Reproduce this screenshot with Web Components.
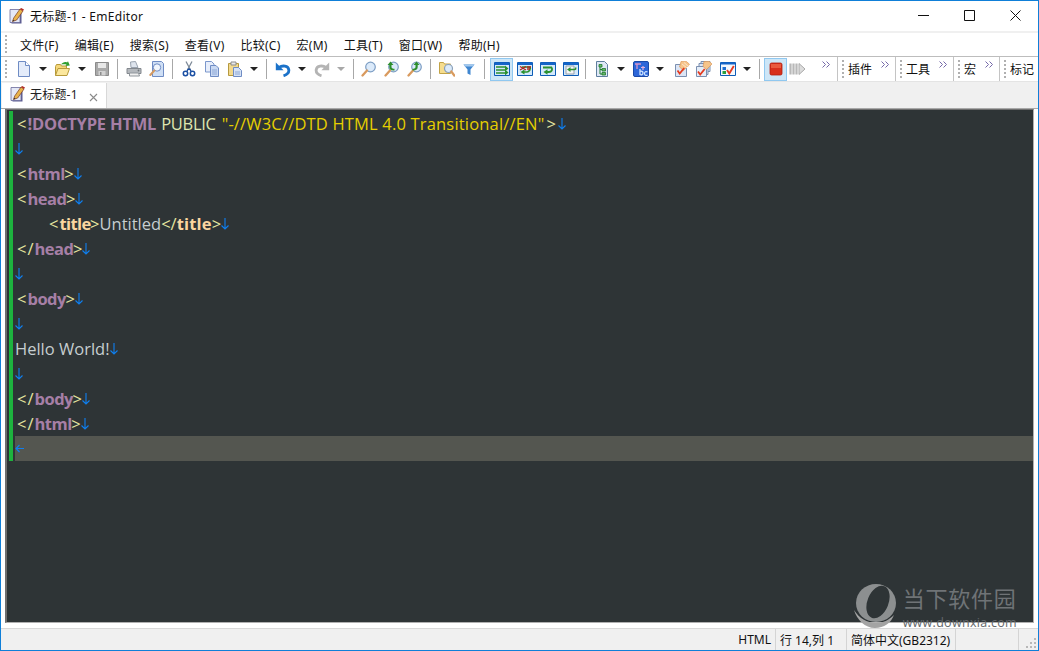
<!DOCTYPE html>
<html>
<head>
<meta charset="utf-8">
<title>EmEditor</title>
<style>
html, body { margin: 0; padding: 0; background: #fff; overflow: hidden; }
</style>
</head>
<body>
<em-window>
  <em-titlebar slot="title" caption="无标题-1 - EmEditor"></em-titlebar>
  <em-menubar slot="menu">
    <em-menu>文件(F)</em-menu><em-menu>编辑(E)</em-menu><em-menu>搜索(S)</em-menu><em-menu>查看(V)</em-menu><em-menu>比较(C)</em-menu><em-menu>宏(M)</em-menu><em-menu>工具(T)</em-menu><em-menu>窗口(W)</em-menu><em-menu>帮助(H)</em-menu>
  </em-menubar>
  <em-toolbar slot="tools">
    <tb-btn icon="doc"></tb-btn><tb-arrow></tb-arrow><tb-btn icon="open"></tb-btn><tb-arrow></tb-arrow><tb-btn icon="save"></tb-btn><tb-sep></tb-sep>
    <tb-btn icon="print"></tb-btn><tb-btn icon="preview"></tb-btn><tb-sep></tb-sep>
    <tb-btn icon="cut"></tb-btn><tb-btn icon="copy"></tb-btn><tb-btn icon="paste"></tb-btn><tb-arrow></tb-arrow><tb-sep></tb-sep>
    <tb-btn icon="undo"></tb-btn><tb-arrow></tb-arrow><tb-btn icon="redo"></tb-btn><tb-arrow off></tb-arrow><tb-sep></tb-sep>
    <tb-btn icon="find" style="margin-left:-1px"></tb-btn><tb-btn icon="findprev"></tb-btn><tb-btn icon="findnext"></tb-btn><tb-sep></tb-sep>
    <tb-btn icon="findfiles"></tb-btn><tb-btn icon="filter" style="margin-left:-1px"></tb-btn><tb-sep></tb-sep>
    <tb-btn icon="wrapnone" active style="margin-left:1px"></tb-btn><tb-btn icon="wrapchar"></tb-btn><tb-btn icon="wrapword"></tb-btn><tb-btn icon="wrapwin"></tb-btn><tb-sep style="margin-left:3px"></tb-sep>
    <tb-btn icon="outline"></tb-btn><tb-arrow></tb-arrow><tb-btn icon="charmap"></tb-btn><tb-arrow></tb-arrow><tb-btn icon="check" style="margin-left:2px"></tb-btn><tb-btn icon="checks" style="margin-left:-1px"></tb-btn><tb-btn icon="wincheck" style="margin-left:1px"></tb-btn><tb-arrow></tb-arrow><tb-sep style="margin-left:4px"></tb-sep>
    <tb-btn icon="stop" active></tb-btn><tb-btn icon="play" style="margin-left:-1.500px"></tb-btn>
    <tb-more style="width:28.500px"></tb-more>
    <tb-band label="插件" width="58"></tb-band>
    <tb-band label="工具" width="58"></tb-band>
    <tb-band label="宏" width="46"></tb-band>
    <tb-band label="标记" width="36" nomore></tb-band>
  </em-toolbar>
  <em-tabstrip slot="tabs"><em-tab caption="无标题-1"></em-tab></em-tabstrip>
  <em-editor slot="editor">
    <code-line><c-t k="o">&lt;</c-t><c-t k="tag" style="letter-spacing:-.2px">!DOCTYPE HTML</c-t><c-t k="attr"> PUBLIC </c-t><c-t k="str">"-//W3C//DTD HTML 4.0 Transitional//EN"</c-t><c-t k="p" style="margin-left:2px">&gt;</c-t><c-eol style="margin-left:2px"></c-eol></code-line>
    <code-line><c-eol></c-eol></code-line>
    <code-line><c-t k="o">&lt;</c-t><c-t k="tag">html</c-t><c-t k="q">&gt;</c-t><c-eol></c-eol></code-line>
    <code-line><c-t k="o">&lt;</c-t><c-t k="tag">head</c-t><c-t k="q">&gt;</c-t><c-eol></c-eol></code-line>
    <code-line indent><c-t k="o">&lt;</c-t><c-t k="title">title</c-t><c-t k="q">&gt;</c-t><c-t>Untitled</c-t><c-t k="p">&lt;/</c-t><c-t k="title" style="letter-spacing:.2px">title</c-t><c-t k="p">&gt;</c-t><c-eol></c-eol></code-line>
    <code-line><c-t k="o">&lt;/</c-t><c-t k="tag">head</c-t><c-t k="q">&gt;</c-t><c-eol></c-eol></code-line>
    <code-line><c-eol></c-eol></code-line>
    <code-line><c-t k="o">&lt;</c-t><c-t k="tag">body</c-t><c-t k="q">&gt;</c-t><c-eol></c-eol></code-line>
    <code-line><c-eol></c-eol></code-line>
    <code-line><c-t>Hello World!</c-t><c-eol></c-eol></code-line>
    <code-line><c-eol></c-eol></code-line>
    <code-line><c-t k="o">&lt;/</c-t><c-t k="tag">body</c-t><c-t k="q">&gt;</c-t><c-eol></c-eol></code-line>
    <code-line><c-t k="o">&lt;/</c-t><c-t k="tag">html</c-t><c-t k="q">&gt;</c-t><c-eol></c-eol></code-line>
    <code-line current><c-eof></c-eof></code-line>
    <em-watermark slot="over"></em-watermark>
  </em-editor>
  <em-status slot="status">
    <st-pane width="70" align="right">HTML</st-pane>
    <st-pane width="71">行 14,列 1</st-pane>
    <st-pane width="109">简体中文(GB2312)</st-pane>
    <st-pane width="63"></st-pane>
  </em-status>
</em-window>

<script>
// shared font stack, CJK goes last so the latin letters keep their own shape
const UI_FONT = '"Noto Sans", "Noto Sans CJK SC", sans-serif';

// the notepad-with-pencil mark, used by the title bar and the tab
const APP_ICON = `<path d="M2.500 2.500h10v13h-10z" fill="#5a5a90"/><path d="M1 1.500h10v13h-10z" fill="#e4e8f6" stroke="#6a6a9a" stroke-width=".8"/><path d="M3.500 13.500l1.200-3.500 6.300-9 3 2-6.300 9z" fill="#e9b44c" stroke="#7a3a20" stroke-width=".7"/><path d="M11 1l3 2 1-1.500-2.800-1.500z" fill="#b32d26"/><path d="M3.500 13.500l.6-1.800 1.500 1z" fill="#333"/>`;

const MAG_GLASS = `<circle cx="9.500" cy="6" r="4.800" fill="#dbeafa" stroke="#7d9ec4" stroke-width="1.200"/><path d="M6 9.500l-4.500 5" stroke="#d99a5e" stroke-width="2.300" stroke-linecap="round"/>`;
const WIN_FRAME = `<path d="M.5 1.500h15v13h-15z" fill="#d4e9fb" stroke="#0d5cb6"/><path d="M1 1.500h14v2.500h-14z" fill="#1565c8"/>`;

// toolbar icons, all on a 16x16 grid
const ICONS = {
  doc: `<path d="M2.500 .5h7l4 4v11h-11z" fill="#e4ecfa" stroke="#6f8cc4"/><path d="M9.500 .5v4h4" fill="#fff" stroke="#6f8cc4"/>`,
  open: `<path d="M.5 14.500v-9l1-2h4l1 1.500h5v2" fill="#f5d77a" stroke="#b79a3a"/><path d="M.5 14.500l2.500-7h11.500l-2.500 7z" fill="#fbe79d" stroke="#b79a3a"/><path d="M6 3.500c1.500-2 4-3 6-2l1-1.200 1.800 4.200-4.300.4 1-1.300c-1.500-.6-3.500-.6-5.500-.1z" fill="#2f9e2f"/>`,
  save: `<path d="M1.500 1.500h13v13h-13z" fill="#a9a9a9" stroke="#8b8b8b"/><path d="M4 2h8v5h-8z" fill="#e8e8e8"/><path d="M4.500 10h7v4.500h-7z" fill="#d2d2d2"/><path d="M6 11h1.500v3h-1.500z" fill="#8b8b8b"/>`,
  print: `<path d="M4.500 1l5-.5 2.500 6h-7z" fill="#dfe5ee" stroke="#9aa3af"/><path d="M1 7.500h14v5h-14z" fill="#b4b8bd" stroke="#83888e"/><path d="M3.500 12h9l1 3h-10z" fill="#f0f0f0" stroke="#8f959b"/><circle cx="12.500" cy="9.500" r=".9" fill="#6f7479"/>`,
  preview: `<path d="M3.500 .5h9l2 2v13h-11z" fill="#cfdff5" stroke="#6f8cc4"/><circle cx="8" cy="6.500" r="3.700" fill="#f1f6fd" stroke="#6f8cc4"/><path d="M5.300 9.500l-4 4.500" stroke="#d39a63" stroke-width="2" stroke-linecap="round"/>`,
  cut: `<path d="M5 .5l4.800 9M11 .5l-4.800 9" stroke="#7e8a98" stroke-width="1.300"/><circle cx="4.500" cy="12.500" r="2.200" fill="#fff" stroke="#1a4fa3" stroke-width="1.500"/><circle cx="11.500" cy="12.500" r="2.200" fill="#fff" stroke="#1a4fa3" stroke-width="1.500"/><path d="M5.800 10.500l1.800-3M10.200 10.500l-1.800-3" stroke="#1a4fa3" stroke-width="1.300"/>`,
  copy: `<path d="M1.500 .5h6l2.500 2.500v8h-8.500z" fill="#e7eefb" stroke="#7b97cc"/><path d="M6.500 4.500h5.500l2.500 2.500v8.500h-8z" fill="#c9d9f3" stroke="#6f8cc4"/><path d="M8 9h5M8 11h5M8 13h5" stroke="#8ea8d6"/>`,
  paste: `<path d="M1.500 2.500h10v12h-10z" fill="#f3d98c" stroke="#b5993f"/><path d="M4 1h5v3h-5z" fill="#e8e8e8" stroke="#8b8b8b"/><path d="M6.500 6.500h5l3 3v6h-8z" fill="#d5e2f6" stroke="#6f8cc4"/><path d="M8 11h5M8 13h5" stroke="#8ea8d6"/>`,
  undo: `<path d="M.8 1.500v7.800h7.800z" fill="#1b72c9"/><path d="M4 6.500c3.500-2.500 9.200-1.800 9.800 2.300.4 3-2.200 5-5.300 6" fill="none" stroke="#1b72c9" stroke-width="2.800"/>`,
  redo: `<path d="M15.200 1.500v7.800h-7.800z" fill="#b4b4b4"/><path d="M12 6.500c-3.500-2.500-9.200-1.800-9.800 2.300-.4 3 2.200 5 5.300 6" fill="none" stroke="#b4b4b4" stroke-width="2.800"/>`,
  find: MAG_GLASS,
  findprev: MAG_GLASS + `<path d="M3.500 4l3-3.500 3 3.500h-2v2c0 1 1 1.800 3 1.800v1.700c-3.500.3-5.200-1.300-5.200-3.500v-2z" fill="#2e8f2e"/>`,
  findnext: MAG_GLASS + `<path d="M12.500 4l-3-3.500-3 3.500h2v2c0 1-1 1.800-3 1.800v1.700c3.500.3 5.200-1.300 5.200-3.500v-2z" fill="#2e8f2e"/>`,
  findfiles: `<path d="M.5 12.500v-11h4l1 1.500h6v9.500z" fill="#f6dd8e" stroke="#c2a347"/><circle cx="9.500" cy="7.500" r="4" fill="#dbeafa" stroke="#8aa0b8" stroke-width="1.200"/><path d="M12.300 10.500l3 4" stroke="#d99a5e" stroke-width="2.200" stroke-linecap="round"/>`,
  filter: `<path d="M2.500 3.500h11l-4 5v5.500l-3-1.500v-4z" fill="#3f86d0"/><path d="M2.500 3.500h11l-1.500 2h-8z" fill="#a4c9ee"/>`,
  wrapnone: WIN_FRAME + `<path d="M2 6h9M2 9h9M2 12h9" stroke="#2b9130" stroke-width="1.500"/><path d="M11 4.500l3.500 3-3.500 3zM11 8.500l3.500 3-3.500 3z" fill="#2b9130"/>`,
  wrapchar: WIN_FRAME + `<path d="M5 6h8c1 2-1 5-3 5h-3" fill="none" stroke="#2b9130" stroke-width="1.700"/><path d="M7.500 8.500v5l-4-2.500z" fill="#2b9130"/><path d="M3 5.500l6 3.500M9 5.500l-6 3.500M10 6h4M10 8h3" stroke="#b3261e" stroke-width="1.300"/>`,
  wrapword: WIN_FRAME + `<path d="M3 6.500h8.500c1.500 2 0 4.500-2.500 4.500h-2" fill="none" stroke="#2b9130" stroke-width="1.800"/><path d="M7.500 8.200v5.600l-4-2.800z" fill="#2b9130"/>`,
  wrapwin: WIN_FRAME + `<path d="M3 5h8v8h-8z" fill="#f5f5f5" stroke="#9aa3af"/><path d="M6 8.500h5c1 0 2 .5 1.500-2" fill="none" stroke="#2b9130" stroke-width="1.600"/><path d="M7.500 6v5l-3.500-2.500z" fill="#2b9130"/>`,
  outline: `<path d="M2.500 .5h8l3 3v12h-11z" fill="#dfe8f6" stroke="#5f7f9f"/><path d="M5 3.500h3v2.500h-3zM8 7.500h3.500v2.500h-3.500zM8 11.500h3.500v2.500h-3.500z" fill="#68b868" stroke="#1f7a2e" stroke-width=".8"/><path d="M6 6v7h2M6 8.500h2" fill="none" stroke="#1f7a2e"/>`,
  charmap: `<rect x=".5" y=".5" width="15" height="15" rx="1.500" fill="#2d66d8" stroke="#1b49a8"/><path d="M2 3h6M4 3v5" stroke="#d895c8" stroke-width="1.300"/><path d="M8 6.500h4M10 5v4" stroke="#e3b0d8" stroke-width="1.200"/><path d="M7 8v5.500c1.500.8 3 0 3-1.500s-1.500-2.200-3-1.500" fill="none" stroke="#cfe4ff" stroke-width="1.300"/><path d="M14.500 11c-1.500-1-3-.3-3 1.500s1.500 2.500 3 1.500" fill="none" stroke="#cfe4ff" stroke-width="1.200"/>`,
  check: `<path d="M1.500 3.500h11v12h-11z" fill="#dbe5f5" stroke="#7b8fb0"/><path d="M7 .5l5-.3 3.500 3-6 6.300-4-3.500z" fill="#f6c48a" stroke="#d88f4b" stroke-width=".6"/><path d="M8 3l5 4M10 1.500l4.500 4" stroke="#fbe5c8"/><path d="M3.500 9.500l2.200 3 4.500-5.500" fill="none" stroke="#e63b20" stroke-width="1.800"/>`,
  checks: `<path d="M5 .5h9v10h-9z" fill="#dbe5f5" stroke="#7b8fb0"/><path d="M3 2.500h9v11h-9z" fill="#dbe5f5" stroke="#7b8fb0"/><path d="M.5 5.500h10v10h-10z" fill="#e5edf8" stroke="#7b8fb0"/><path d="M8 .5l5-.3 3 2.800-5.500 5.500-3.500-3z" fill="#f6c48a" stroke="#d88f4b" stroke-width=".6"/><path d="M2 10.500l2.200 3 4.500-5.500" fill="none" stroke="#e63b20" stroke-width="1.800"/>`,
  wincheck: `<path d="M.5 1.500h15v13h-15z" fill="#f4f8fd" stroke="#0d5cb6"/><path d="M1 1.500h14v2h-14z" fill="#1565c8"/><path d="M2.500 6h3.500v3h-3.500z" fill="#1f6fd0"/><path d="M2.500 10h3.500v3h-3.500z" fill="#2b9f3c"/><path d="M7 9l2.300 3.500 4.500-7.500" fill="none" stroke="#e63b20" stroke-width="1.900"/>`,
  stop: `<rect x="2" y="2" width="12" height="12" rx="1.500" fill="#d8301c" stroke="#b3200f" stroke-width=".8"/><path d="M3 3h10v4h-10z" fill="#ea5a3e"/>`,
  play: `<path d="M1.500 2.500v11M4.500 2.500v11M7.500 2.500v11" stroke="#b8b8b8" stroke-width="2.200"/><path d="M10 2.500l6 5.500-6 5.500z" fill="#dcdcdc" stroke="#a8a8a8"/>`
};

const CHEVRON = `<svg width="8" height="7"><path d="M.5 .5l3 3-3 3M4.500 .5l3 3-3 3" fill="none" stroke="#7468a8"/></svg>`;
const GRIP = `repeating-linear-gradient(#b0b0b0 0 2px, transparent 2px 4px)`;

class EmWindow extends HTMLElement {
  constructor() {
    super();
    this.attachShadow({mode: 'open'}).innerHTML = `
      <style>
        :host { display: flex; flex-direction: column; box-sizing: border-box; width: 1039px; height: 651px;
                border: 1px solid #0f7fd8; background: #fff; font-family: ${UI_FONT}; overflow: hidden; }
        .editor { flex: 1; min-height: 0; display: flex; }
      </style>
      <slot name="title"></slot>
      <slot name="menu"></slot>
      <slot name="tools"></slot>
      <slot name="tabs"></slot>
      <div class="editor"><slot name="editor"></slot></div>
      <slot name="status"></slot>`;
  }
}

class EmTitlebar extends HTMLElement {
  constructor() {
    super();
    this.attachShadow({mode: 'open'}).innerHTML = `
      <style>
        :host { display: flex; align-items: center; box-sizing: border-box; height: 30px; padding: 0 0 1px 8px; background: #fff; font-size: 12px; letter-spacing: .3px; color: #111; }
        .cap { margin-left: 5px; flex: 1; }
        .win { display: flex; }
        .win span { width: 46px; height: 29px; display: flex; align-items: center; justify-content: center; }
      </style>
      <svg width="16" height="16" viewBox="0 0 16 16">${APP_ICON}</svg>
      <span class="cap"></span>
      <div class="win">
        <span><svg width="11" height="11"><path d="M0 5.500h11" stroke="#111"/></svg></span>
        <span><svg width="11" height="11"><path d="M.5 .5h10v10h-10z" fill="none" stroke="#111"/></svg></span>
        <span><svg width="11" height="11"><path d="M.5 .5l10 10M10.500 .5l-10 10" stroke="#111"/></svg></span>
      </div>`;
    this.shadowRoot.querySelector('.cap').textContent = this.getAttribute('caption');
  }
}

class EmMenubar extends HTMLElement {
  constructor() {
    super();
    this.attachShadow({mode: 'open'}).innerHTML = `
      <style>
        :host { display: flex; align-items: center; box-sizing: border-box; height: 26px; border-top: 2px solid #f0f0f0; border-bottom: 1px solid #bdbdbd;
                padding-left: 4px; background: #fff; }
        .grip { width: 2px; height: 19px; margin-right: 5px; background: ${GRIP}; }
      </style>
      <div class="grip"></div><slot></slot>`;
  }
}

class EmMenu extends HTMLElement {
  constructor() {
    super();
    this.attachShadow({mode: 'open'}).innerHTML = `
      <style>:host { display: block; padding: 0 8px; font-size: 12px; letter-spacing: .25px; color: #111; white-space: nowrap; }</style><slot></slot>`;
  }
}

class EmToolbar extends HTMLElement {
  constructor() {
    super();
    this.attachShadow({mode: 'open'}).innerHTML = `
      <style>
        :host { display: flex; align-items: center; box-sizing: border-box; height: 24px; padding-left: 4px; background: #fff; overflow: hidden; white-space: nowrap; }
        .grip { flex: none; width: 2px; height: 19px; margin-right: 5px; background: ${GRIP}; }
      </style>
      <div class="grip"></div><slot></slot>`;
  }
}

class TbBtn extends HTMLElement {
  constructor() {
    super();
    this.attachShadow({mode: 'open'}).innerHTML = `
      <style>
        :host { flex: none; display: flex; align-items: center; justify-content: center; box-sizing: border-box; width: 23px; height: 23px; }
        :host([active]) { background: #cde6f7; border: 1px solid #90c8f0; }
        svg { display: block; }
      </style>
      <svg width="16" height="16" viewBox="0 0 16 16">${ICONS[this.getAttribute('icon')] || ''}</svg>`;
  }
}

class TbArrow extends HTMLElement {
  constructor() {
    super();
    this.attachShadow({mode: 'open'}).innerHTML = `
      <style>
        :host { flex: none; display: flex; align-items: center; justify-content: center; width: 16px; height: 23px; }
        i { display: block; border: 4px solid transparent; border-top-color: #222; border-bottom: 0; width: 0; height: 0; }
        :host([off]) i { border-top-color: #a8a8a8; }
      </style><i></i>`;
  }
}

class TbSep extends HTMLElement {
  constructor() {
    super();
    this.attachShadow({mode: 'open'}).innerHTML = `
      <style>
        :host { flex: none; display: block; width: 1px; height: 20px; margin: 0 4px; background: #a8a8a8; }
      </style>`;
  }
}

class TbMore extends HTMLElement {
  constructor() {
    super();
    this.attachShadow({mode: 'open'}).innerHTML = `
      <style>
        :host { flex: none; display: flex; justify-content: flex-end; align-self: flex-start; height: 16px; padding-top: 4px; }
        svg { margin-right: 7px; }
      </style>
      ${CHEVRON}`;
  }
}

// a collapsed rebar band: grip, label and the chevron
class TbBand extends HTMLElement {
  constructor() {
    super();
    const w = this.getAttribute('width');
    this.attachShadow({mode: 'open'}).innerHTML = `
      <style>
        :host { flex: none; display: flex; align-items: center; box-sizing: border-box; width: ${w}px; height: 24px; border-left: 1px solid #c4c4c4; padding-left: 4px; font-size: 12px; color: #111; }
        .grip { flex: none; width: 2px; height: 19px; margin-right: 4px; background: ${GRIP}; }
        .lab { flex: 1; }
        svg { align-self: flex-start; margin: 4px 6px 0 0; }
      </style>
      <div class="grip"></div><span class="lab">${this.getAttribute('label')}</span>
      ${this.hasAttribute('nomore') ? '' : CHEVRON}`;
  }
}

class EmTabstrip extends HTMLElement {
  constructor() {
    super();
    this.attachShadow({mode: 'open'}).innerHTML = `
      <style>
        :host { display: flex; align-items: flex-end; box-sizing: border-box; height: 28px; padding-left: 1px; background: #f0f0f0; border-top: 1px solid #e4e4e4; border-bottom: 1px solid #a8a8a8; }
      </style><slot></slot>`;
  }
}

class EmTab extends HTMLElement {
  constructor() {
    super();
    this.attachShadow({mode: 'open'}).innerHTML = `
      <style>
        :host { display: flex; align-items: center; box-sizing: border-box; width: 105px; height: 25px; padding: 0 0 4px 8px; background: #fff; border-right: 1px solid #d8d8d8; font-size: 12px; letter-spacing: .2px; color: #222; }
        .cap { margin-left: 4px; flex: 1; }
        svg.x { align-self: flex-end; margin: 0 8px 2px 0; }
      </style>
      <svg width="16" height="16" viewBox="0 0 16 16">${APP_ICON}</svg>
      <span class="cap">${this.getAttribute('caption')}</span>
      <svg class="x" width="9" height="9"><path d="M1 1l7 7M8 1l-7 7" stroke="#8a8a8a" stroke-width="1.100"/></svg>`;
  }
}

class EmEditor extends HTMLElement {
  constructor() {
    super();
    this.attachShadow({mode: 'open'}).innerHTML = `
      <style>
        :host { flex: 1; display: flex; margin: 0 4px 5px 4px; }
        .frame { flex: 1; position: relative; background: #2e3436; border-left: 2px solid #6e6e6e; border-top: 1px solid #6e6e6e; border-right: 1px solid #b0b0b0; border-bottom: 1px solid #b0b0b0;
                 font: 16.500px "Open Sans", "Noto Sans CJK SC", sans-serif; color: #c6ced0; padding-top: 1px; }
        .code { position: relative; padding-left: 8px; }
        .code::before { content: ""; position: absolute; left: 2px; top: 0; bottom: 0; width: 4px; background: #1db33e; }
      </style>
      <div class="frame">
        <div class="code"><slot></slot></div>
        <slot name="over"></slot>
      </div>`;
  }
}

class CodeLine extends HTMLElement {
  constructor() {
    super();
    this.attachShadow({mode: 'open'}).innerHTML = `<style>
        :host { display: flex; align-items: center; height: 25px; }
        :host([indent]) { padding-left: 32px; }
        :host([current]) { background: #545650; }
      </style><slot></slot>`;
  }
}

// a run of highlighted code, white-space is kept so the shadow markup has no blanks in it
class CT extends HTMLElement {
  constructor() {
    super();
    this.attachShadow({mode: 'open'}).innerHTML = `<style>
        :host { color: #c6ced0; white-space: pre; }
        :host([k=p]) { color: #e6e6a0; }
        :host([k=o]) { color: #e6e6a0; padding-left: 2px; letter-spacing: 1px; }
        :host([k=q]) { color: #e6e6a0; margin-left: -.5px; }
        :host([k=tag]) { color: #a67fa6; font-weight: 700; letter-spacing: -.5px; }
        :host([k=title]) { color: #fbd6a0; font-weight: 700; letter-spacing: -.6px; }
        :host([k=attr]) { color: #dfe6b0; letter-spacing: -.3px; padding: 0 2px 0 1px; }
        :host([k=str]) { color: #e6cf00; letter-spacing: .18px; }
      </style><slot></slot>`;
  }
}

class CEol extends HTMLElement {
  constructor() {
    super();
    this.attachShadow({mode: 'open'}).innerHTML = `
      <style>:host { display: block; height: 13px; } svg { display: block; }</style>
      <svg width="8" height="13"><path d="M4 1v11M.5 8.500l3.500 3.500 3.500-3.500" fill="none" stroke="#0f7ff0" stroke-width="1.100"/></svg>`;
  }
}

class CEof extends HTMLElement {
  constructor() {
    super();
    this.attachShadow({mode: 'open'}).innerHTML = `
      <style>:host { display: block; height: 9px; } svg { display: block; }</style>
      <svg width="9" height="9"><path d="M9 4.500h-8M4.500 1l-3.500 3.500 3.500 3.500" fill="none" stroke="#0f7ff0" stroke-width="1.100"/></svg>`;
  }
}

// download site stamp sitting over the editor
class EmWatermark extends HTMLElement {
  constructor() {
    super();
    this.attachShadow({mode: 'open'}).innerHTML = `
      <style>
        :host { position: absolute; right: 16px; bottom: -9px; display: flex; align-items: center; gap: 7px; pointer-events: none; }
        .t { display: flex; flex-direction: column; align-items: flex-start; }
        .a { font: 22px "Noto Sans CJK SC", sans-serif; letter-spacing: .8px; color: #6f7376; line-height: 33px; }
        .b { font: 12.500px "Open Sans", sans-serif; letter-spacing: .3px; color: #63676a; line-height: 17px; }
      </style>
      <svg width="42" height="46" viewBox="0 0 42 46">
        <path d="M0 27c3 10 11 18 21 18 9 0 16-5 19-13-5 5-11 8-18 8-9 0-17-5-22-13z" fill="#a3a3a3"/>
        <ellipse cx="22" cy="20" rx="20" ry="19" fill="#8c8f90"/>
        <ellipse cx="24" cy="19" rx="10.500" ry="17" transform="rotate(22 24 19)" fill="#2e3436"/>
      </svg>
      <div class="t"><div class="a">当下软件园</div><div class="b">www.downxia.com</div></div>`;
  }
}

class EmStatus extends HTMLElement {
  constructor() {
    super();
    this.attachShadow({mode: 'open'}).innerHTML = `
      <style>
        :host { position: relative; display: flex; justify-content: flex-end; box-sizing: border-box; height: 22px; background: #f0f0f0; border-top: 1px solid #d8d8d8; padding-right: 19px; }
        svg { position: absolute; right: 1px; bottom: 1px; }
      </style>
      <slot></slot>
      <svg width="12" height="12"><path d="M9 1h2v2h-2zM5 5h2v2h-2zM9 5h2v2h-2zM1 9h2v2h-2zM5 9h2v2h-2zM9 9h2v2h-2z" fill="#b8b8b8"/></svg>`;
  }
}

class StPane extends HTMLElement {
  constructor() {
    super();
    const right = this.getAttribute('align') === 'right';
    this.attachShadow({mode: 'open'}).innerHTML = `
      <style>
        :host { display: flex; align-items: center; justify-content: ${right ? 'flex-end' : 'flex-start'}; box-sizing: border-box; width: ${this.getAttribute('width')}px; border-right: 1px solid #d4d4d4; padding: 0 4px; font-size: 12px; color: #111; white-space: nowrap; }
      </style><slot></slot>`;
  }
}

customElements.define('em-window', EmWindow);
customElements.define('em-titlebar', EmTitlebar);
customElements.define('em-menubar', EmMenubar);
customElements.define('em-menu', EmMenu);
customElements.define('em-toolbar', EmToolbar);
customElements.define('tb-btn', TbBtn);
customElements.define('tb-arrow', TbArrow);
customElements.define('tb-sep', TbSep);
customElements.define('tb-more', TbMore);
customElements.define('tb-band', TbBand);
customElements.define('em-tabstrip', EmTabstrip);
customElements.define('em-tab', EmTab);
customElements.define('em-editor', EmEditor);
customElements.define('code-line', CodeLine);
customElements.define('c-t', CT);
customElements.define('c-eol', CEol);
customElements.define('c-eof', CEof);
customElements.define('em-watermark', EmWatermark);
customElements.define('em-status', EmStatus);
customElements.define('st-pane', StPane);
</script>
</body>
</html>
